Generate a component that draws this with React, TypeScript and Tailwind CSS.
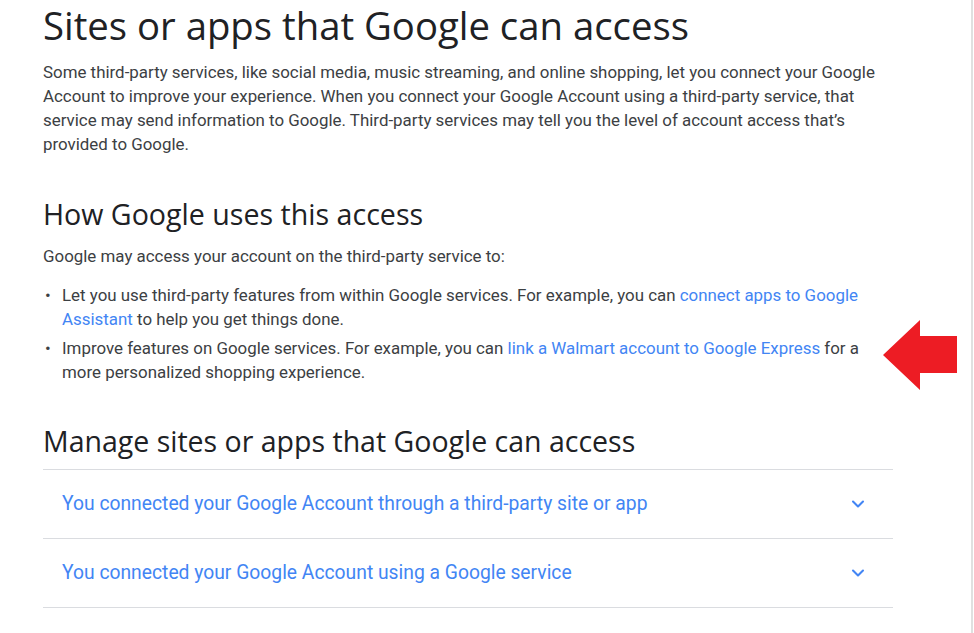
import { ChevronDown } from 'lucide-react'

const heading = { fontFamily: '"Open Sans", Arial, sans-serif' }

function Row({ label }: { label: string }) {
  return (
    <div className="flex h-[69px] items-center justify-between border-b border-[#dadce0] pl-[19px] pr-[25px]">
      <span className="text-[19.3px] text-[#4285f4]">{label}</span>
      <ChevronDown className="h-5 w-5 text-[#4285f4]" strokeWidth={2.5} />
    </div>
  )
}

export default function App() {
  return (
    <div
      className="relative flex h-[633px] w-[974px] overflow-hidden bg-white text-[#3c4043]"
      style={{ fontFamily: 'Roboto, Arial, sans-serif' }}
    >
      <main className="flex-1 pl-[43px] pt-[1px]">
        <div className="w-[850px]">
          <h1 className="text-[38.3px] leading-[48px] text-[#202124]" style={heading}>
            Sites or apps that Google can access
          </h1>
          <p className="mt-[11px] whitespace-nowrap text-[16.9px] leading-[24px]">
            Some third-party services, like social media, music streaming, and online shopping, let you connect your Google
            <br />
            Account to improve your experience. When you connect your Google Account using a third-party service, that
            <br />
            service may send information to Google. Third-party services may tell you the level of account access that’s
            <br />
            provided to Google.
          </p>

          <h2 className="mt-[40px] text-[28.6px] leading-[36px] text-[#202124]" style={heading}>
            How Google uses this access
          </h2>
          <p className="mt-[12px] text-[16.9px] leading-[24px]">
            Google may access your account on the third-party service to:
          </p>
          <ul className="mt-[15px] space-y-[5px] whitespace-nowrap text-[16.9px] leading-[24px]">
            <li className="flex">
              <span className="w-[19px] shrink-0 pl-[2px]">•</span>
              <span>
                Let you use third-party features from within Google services. For example, you can{' '}
                <a className="text-[#4285f4]">connect apps to Google</a>
                <br />
                <a className="text-[#4285f4]">Assistant</a> to help you get things done.
              </span>
            </li>
            <li className="flex">
              <span className="w-[19px] shrink-0 pl-[2px]">•</span>
              <span>
                Improve features on Google services. For example, you can{' '}
                <a className="text-[#4285f4]">link a Walmart account to Google Express</a> for a
                <br />
                more personalized shopping experience.
              </span>
            </li>
          </ul>

          <h2 className="mt-[39px] text-[28.5px] leading-[36px] text-[#202124]" style={heading}>
            Manage sites or apps that Google can access
          </h2>
          <div className="mt-[10px] border-t border-[#dadce0]">
            <Row label="You connected your Google Account through a third-party site or app" />
            <Row label="You connected your Google Account using a Google service" />
          </div>
        </div>
      </main>
      <div className="w-[2px] bg-[#e0e0e0]" />
      <div className="w-[1px]" />

      <svg className="absolute left-[882px] top-[319px]" width="76" height="72" viewBox="0 0 76 72">
        <polygon points="1,36 38,1 38,17 75,17 75,54 38,54 38,71" fill="#ed1c24" />
      </svg>
    </div>
  )
}
